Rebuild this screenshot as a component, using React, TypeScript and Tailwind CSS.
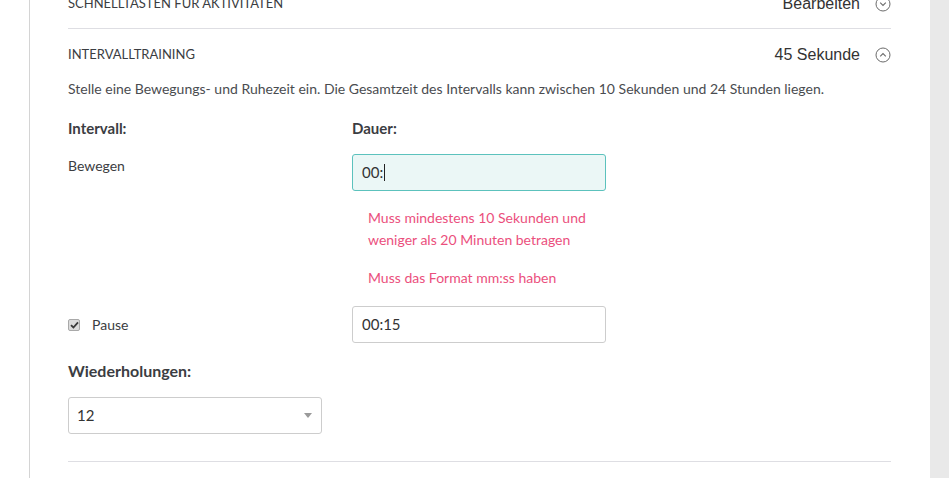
const font = { fontFamily: 'Lato, "Open Sans", sans-serif' };

function CircleChevron({ up }: { up?: boolean }) {
  return (
    <svg width="16" height="16" viewBox="0 0 16 16" className="shrink-0">
      <circle cx="8" cy="8" r="7" fill="none" stroke="#6b6b6b" strokeWidth="1" />
      {up ? (
        <path d="M5.2 9.3 L8 6.5 L10.8 9.3" fill="none" stroke="#6b6b6b" strokeWidth="1.1" />
      ) : (
        <path d="M5.2 6.7 L8 9.5 L10.8 6.7" fill="none" stroke="#6b6b6b" strokeWidth="1.1" />
      )}
    </svg>
  );
}

export default function App() {
  return (
    <div className="flex h-[478px] w-full overflow-hidden bg-white text-[#3b3d42]" style={font}>
      <div className="w-[29px] shrink-0 bg-white" />
      <div className="flex-1 border-l border-[#d4d4d4] pl-[38px] pr-[39px]">
        {/* Schnelltasten row (cut off at top) */}
        <div className="-mt-[21px] flex h-[50px] items-center justify-between border-b border-[#dedee3]">
          <span className="text-[13px] uppercase">Schnelltasten für Aktivitäten</span>
          <div className="flex items-center gap-[15px]">
            <span className="font-['Liberation_Sans',Arial,sans-serif] text-[16px] text-[#333]">Bearbeiten</span>
            <CircleChevron />
          </div>
        </div>

        {/* Intervalltraining */}
        <div className="flex h-[48px] items-center justify-between pt-[4px]">
          <span className="text-[13px] uppercase">Intervalltraining</span>
          <div className="flex items-center gap-[15px]">
            <span className="font-['Liberation_Sans',Arial,sans-serif] text-[16px] text-[#333]">45 Sekunde</span>
            <CircleChevron up />
          </div>
        </div>

        <p className="mt-[2px] text-[14px] leading-[20px] text-[#4a4c50]">
          Stelle eine Bewegungs- und Ruhezeit ein. Die Gesamtzeit des Intervalls kann zwischen 10 Sekunden und 24 Stunden liegen.
        </p>

        <div className="mt-[19px] grid grid-cols-[284px_254px] text-[15px] font-bold leading-[20px]">
          <span>Intervall:</span>
          <span>Dauer:</span>
        </div>

        {/* Bewegen */}
        <div className="mt-[16px] grid grid-cols-[284px_254px]">
          <span className="pt-[2px] text-[14px] leading-[20px]">Bewegen</span>
          <div>
            <div className="flex h-[37px] items-center rounded-[3px] border border-[#5cc2bd] bg-[#ebf7f6] px-[9px] text-[15px] text-[#333]">
              00:<span className="ml-[1px] inline-block h-[17px] w-px bg-[#222]" />
            </div>
            <div className="mt-[16px] pl-[16px] text-[14px] leading-[22px] text-[#eb4f7d]">
              <p>Muss mindestens 10 Sekunden und<br />weniger als 20 Minuten betragen</p>
              <p className="mt-[16px]">Muss das Format mm:ss haben</p>
            </div>
          </div>
        </div>

        {/* Pause */}
        <div className="mt-[17px] grid grid-cols-[284px_254px] items-center">
          <label className="flex items-center gap-[12px] text-[14px]">
            <span className="flex h-[12px] w-[12px] items-center justify-center rounded-[2px] border border-[#a9a9a9] bg-[#dcdcdc]">
              <svg width="9" height="8" viewBox="0 0 9 8">
                <path d="M1 4.2 L3.4 6.5 L8 1.3" fill="none" stroke="#3a3a3a" strokeWidth="1.8" />
              </svg>
            </span>
            Pause
          </label>
          <div className="flex h-[37px] items-center rounded-[3px] border border-[#cdcdcd] bg-white px-[9px] text-[15px] text-[#333]">
            00:15
          </div>
        </div>

        <div className="mt-[18px] text-[16px] font-bold leading-[20px]">Wiederholungen:</div>

        <div className="mt-[16px] flex h-[37px] w-[254px] items-center justify-between rounded-[3px] border border-[#cdcdcd] bg-white pl-[8px] pr-[9px] text-[15px] text-[#333]">
          <span>12</span>
          <svg width="8" height="5" viewBox="0 0 8 5">
            <path d="M0 0 L8 0 L4 5 Z" fill="#9a9a9a" />
          </svg>
        </div>

        <div className="mt-[27px] border-t border-[#dedee3]" />
      </div>
      <div className="w-[19px] shrink-0 bg-[#e9e9e9]" />
    </div>
  );
}
